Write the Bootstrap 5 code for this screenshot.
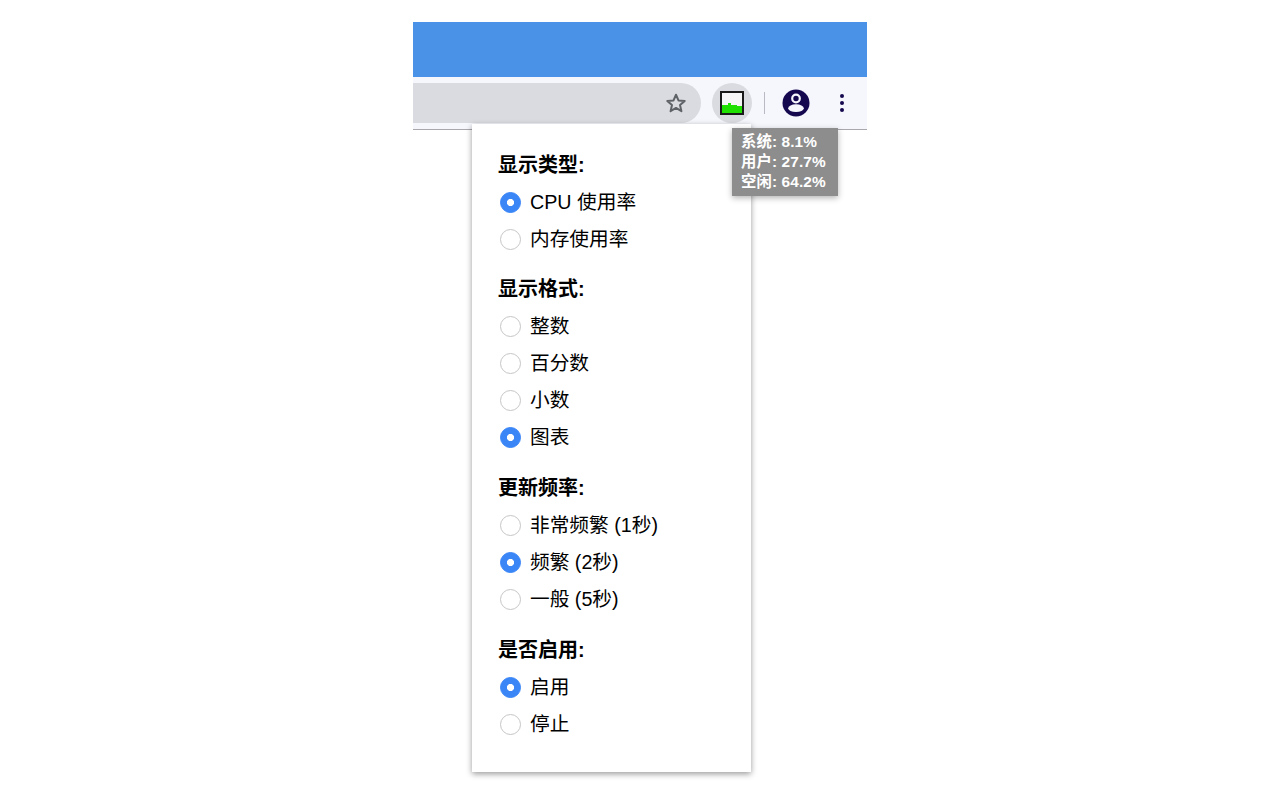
<!DOCTYPE html>
<html lang="zh-CN">
<head>
    <meta charset="UTF-8">
    <meta name="viewport" content="width=device-width, initial-scale=1.0">
    <title>CPU 使用率</title>
    <link href="https://cdn.jsdelivr.net/npm/bootstrap@5.3.0/dist/css/bootstrap.min.css" rel="stylesheet">
    <style>
        body { background: #fff; font-family: "Liberation Sans", "Noto Sans CJK SC", sans-serif; height: 800px; overflow: hidden; }
        .browser-frame { width: 454px; margin-left: 413px; margin-top: 22px; position: relative; }
        .title-strip { height: 55px; background: #4a92e8; }
        .tool-strip { height: 53px; background: #f5f7fd; border-bottom: 1px solid #a9a9ad; padding-top: 6px; }
        .omni-box { width: 288px; height: 40px; background: #dadbe0; border-radius: 0 20px 20px 0; padding-right: 14px; }
        .ext-btn { width: 40px; height: 40px; border-radius: 50%; background: #dadbe0; margin-left: 11px; }
        .tool-sep { width: 1px; height: 22px; background: #b9bbc4; margin: 9px 17px 0 12px; }
        .ext-pic { display: block; }
        .avatar-pic { margin-top: 6px; }
        .menu-dots { margin-left: 29px; margin-top: 8px; }
        .popup-panel { position: absolute; left: 59px; top: 102px; width: 279px; height: 648px; background: #fff; box-shadow: 0 2px 6px rgba(0,0,0,.4); padding: 28px 27px 0 27px; }
        .group-title { font-size: 20px; font-weight: 700; line-height: 26px; color: #000; margin: 0 0 6px -1px; }
        .opt-group { margin-bottom: 19px; }
        .opt-group:first-child { margin-bottom: 18px; }
        .opt-row { height: 37px; margin: 0; padding: 0; gap: 9px; padding-left: 1px; font-size: 19.7px; color: #000; }
        .opt-row .form-check-input { width: 21px; height: 21px; margin: 0; float: none; border: 1.6px solid #c6c6c6; flex-shrink: 0; }
        .opt-row .form-check-input:checked { background-color: #3b86f7; border-color: #3b86f7; background-image: radial-gradient(circle, #fff 3.2px, transparent 3.9px); }
        .tip-box { position: absolute; left: 319px; top: 106px; width: 106px; height: 68px; background: #8d8d8d; color: #fff; font-size: 15.4px; font-weight: 700; line-height: 20px; letter-spacing: .1px; padding: 4px 0 0 9px; box-shadow: 0 2px 6px rgba(0,0,0,.3); white-space: nowrap; }
    </style>
</head>
<body>

    <div class="browser-frame">
        <div class="title-strip"></div>
        <div class="tool-strip d-flex align-items-start">
            <div class="omni-box d-flex align-items-center justify-content-end">
                <svg width="22" height="22" viewBox="0 0 24 24" fill="none" stroke="#5f6368" stroke-width="2.2" stroke-linejoin="round"><path d="M12 3l2.7 6.2 6.8.6-5.1 4.500 1.500 6.600L12 17.400l-5.900 3.500 1.500-6.600-5.100-4.500 6.800-.6z"/></svg>
            </div>
            <div class="ext-btn d-flex align-items-center justify-content-center">
                <svg class="ext-pic" width="24" height="24" viewBox="0 0 24 24">
                    <rect x="1" y="1" width="22" height="22" fill="#f6f6f6"/>
                    <path d="M1 23V14h7v-2h3v2h6v1h6v8z" fill="#1fe000"/>
                    <rect x="1" y="1" width="22" height="22" fill="none" stroke="#1a1a1a" stroke-width="2"/>
                </svg>
            </div>
            <div class="tool-sep"></div>
            <svg class="avatar-pic" width="28" height="28" viewBox="0 0 28 28"><circle cx="14" cy="14" r="13.500" fill="#16084f"/><circle cx="14" cy="9.500" r="3.800" fill="none" stroke="#f5f7fd" stroke-width="2.200"/><ellipse cx="14" cy="19.200" rx="7.800" ry="3.900" fill="#f5f7fd"/></svg>
            <svg class="menu-dots" width="6" height="24" viewBox="0 0 6 24" fill="#16084f"><circle cx="3" cy="5" r="2"/><circle cx="3" cy="12" r="2"/><circle cx="3" cy="19" r="2"/></svg>
        </div>

        <div class="popup-panel">
            <div class="opt-group">
                <div class="group-title">显示类型:</div>
                <label class="opt-row d-flex align-items-center"><input class="form-check-input" type="radio" name="show-type" checked>CPU 使用率</label>
                <label class="opt-row d-flex align-items-center"><input class="form-check-input" type="radio" name="show-type">内存使用率</label>
            </div>
            <div class="opt-group">
                <div class="group-title">显示格式:</div>
                <label class="opt-row d-flex align-items-center"><input class="form-check-input" type="radio" name="show-format">整数</label>
                <label class="opt-row d-flex align-items-center"><input class="form-check-input" type="radio" name="show-format">百分数</label>
                <label class="opt-row d-flex align-items-center"><input class="form-check-input" type="radio" name="show-format">小数</label>
                <label class="opt-row d-flex align-items-center"><input class="form-check-input" type="radio" name="show-format" checked>图表</label>
            </div>
            <div class="opt-group">
                <div class="group-title">更新频率:</div>
                <label class="opt-row d-flex align-items-center"><input class="form-check-input" type="radio" name="rate">非常频繁 (1秒)</label>
                <label class="opt-row d-flex align-items-center"><input class="form-check-input" type="radio" name="rate" checked>频繁 (2秒)</label>
                <label class="opt-row d-flex align-items-center"><input class="form-check-input" type="radio" name="rate">一般 (5秒)</label>
            </div>
            <div class="opt-group">
                <div class="group-title">是否启用:</div>
                <label class="opt-row d-flex align-items-center"><input class="form-check-input" type="radio" name="enabled" checked>启用</label>
                <label class="opt-row d-flex align-items-center"><input class="form-check-input" type="radio" name="enabled">停止</label>
            </div>
        </div>

        <div class="tip-box">系统: 8.1%<br>用户: 27.7%<br>空闲: 64.2%</div>
    </div>

    <script src="https://cdn.jsdelivr.net/npm/bootstrap@5.3.0/dist/js/bootstrap.bundle.min.js"></script>
</body>
</html>
